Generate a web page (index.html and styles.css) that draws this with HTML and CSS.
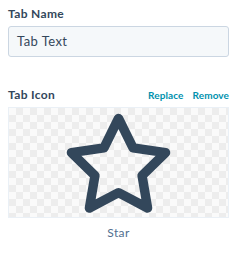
FILE: index.html
```html
<!DOCTYPE html>
<html>
<head>
<meta charset="utf-8">
<link rel="stylesheet" href="styles.css">
</head>
<body>
<div class="panel">
  <div class="field">
    <label class="label">Tab Name</label>
    <div class="input">Tab Text</div>
  </div>
  <div class="field icon-field">
    <div class="row">
      <span class="label">Tab Icon</span>
      <div class="actions">
        <a class="link">Replace</a>
        <a class="link">Remove</a>
      </div>
    </div>
    <div class="preview">
      <svg class="star" viewBox="0 0 24 24" width="113" height="113" fill="none" stroke="#33475b" stroke-width="2" stroke-linejoin="round" stroke-linecap="round">
        <polygon points="12 2 15.09 8.26 22 9.27 17 14.14 18.18 21.02 12 17.77 5.82 21.02 7 14.14 2 9.27 8.91 8.26 12 2"></polygon>
      </svg>
    </div>
    <div class="caption">Star</div>
  </div>
</div>
</body>
</html>
```
FILE: styles.css
```css
* { box-sizing: border-box; }
html, body { margin: 0; padding: 0; background: #fff; }
body {
  font-family: "Lato", "Open Sans", sans-serif;
  color: #33475b;
}
.panel {
  padding: 6px 17px 0 8px;
  width: 246px;
}
.field { display: flex; flex-direction: column; }
.label {
  font-size: 12px;
  font-weight: 700;
  line-height: 16px;
  letter-spacing: 0.35px;
  color: #33475b;
}
.field > .label { margin-bottom: 4px; }
.input {
  height: 31px;
  border: 1px solid #cbd6e2;
  border-radius: 3px;
  background: #f5f8fa;
  padding: 0 8px;
  font-size: 13px;
  line-height: 29px;
  letter-spacing: 0.45px;
  color: #33475b;
}
.icon-field { margin-top: 30px; }
.row {
  display: flex;
  justify-content: space-between;
  align-items: center;
  height: 16px;
  margin-bottom: 4px;
}
.actions { display: flex; gap: 9px; }
.link {
  font-size: 10px;
  font-weight: 700;
  letter-spacing: 0.1px;
  color: #0091ae;
}
.preview {
  height: 111px;
  border: 1px solid #eaf0f6;
  display: flex;
  justify-content: center;
  align-items: center;
  background-color: #fafafa;
  background-image:
    linear-gradient(45deg, #ededed 25%, transparent 25%, transparent 75%, #ededed 75%),
    linear-gradient(45deg, #ededed 25%, transparent 25%, transparent 75%, #ededed 75%);
  background-size: 14px 14px;
  background-position: 0 0, 7px 7px;
  overflow: visible;
}
.star { margin-top: 6px; flex: none; }
.caption {
  text-align: center;
  font-size: 12px;
  line-height: 16px;
  margin-top: 7px;
  letter-spacing: 0.4px;
  color: #516f90;
}
```
